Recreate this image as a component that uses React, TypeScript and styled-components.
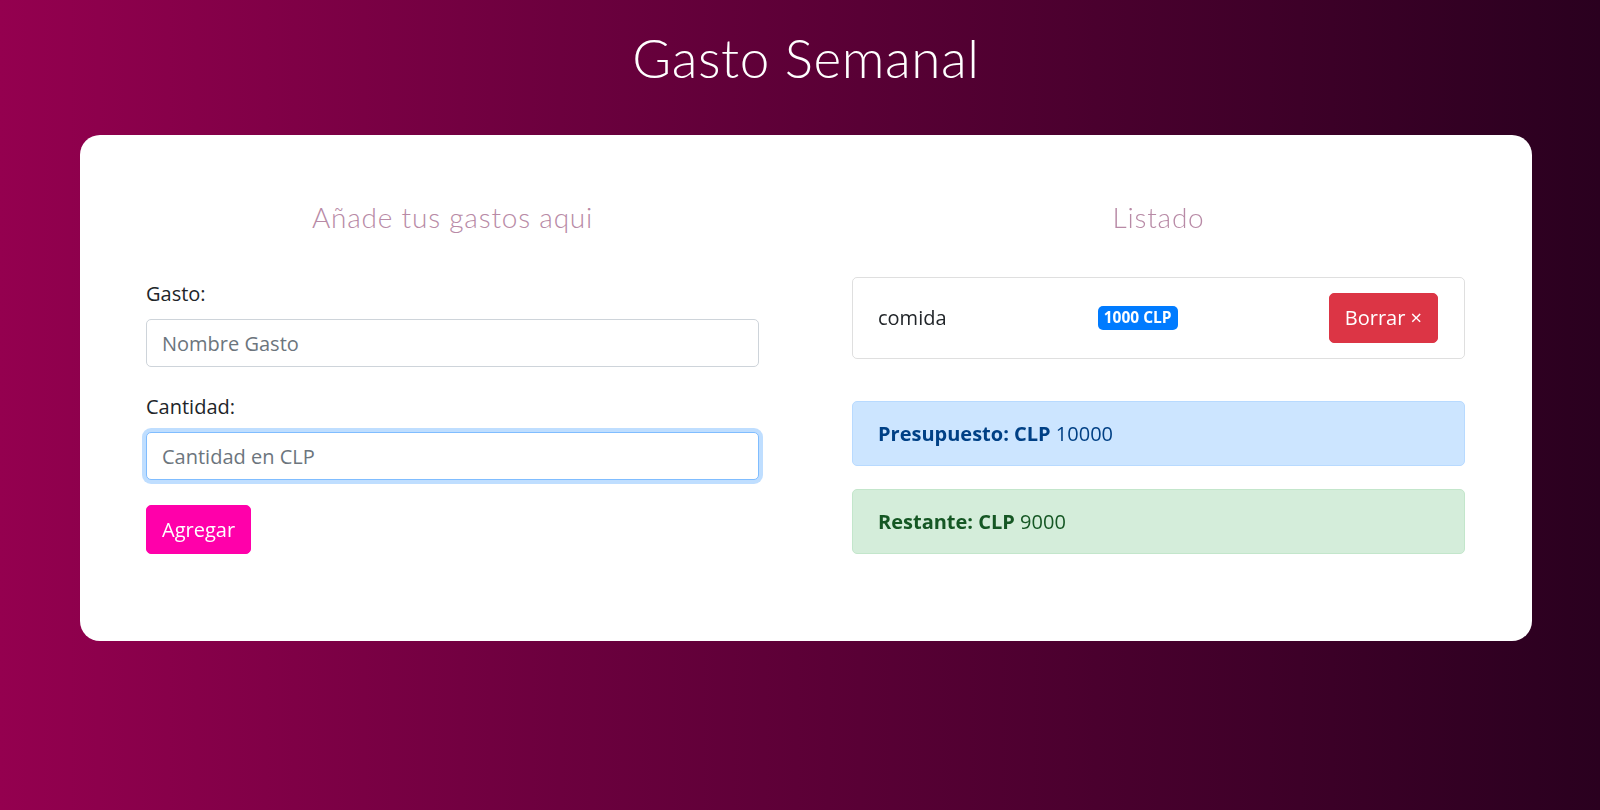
import React from 'react';
import styled, { createGlobalStyle, css } from 'styled-components';

const GlobalStyle = createGlobalStyle`
  * { box-sizing: border-box; }
  body {
    margin: 0;
    font-family: "Open Sans", "Noto Sans", sans-serif;
    color: #212529;
  }
`;

type Variant = 'primary' | 'success';

const ALERTS: Record<Variant, { bg: string; border: string; color: string }> = {
  primary: { bg: '#cce5ff', border: '#b8daff', color: '#004085' },
  success: { bg: '#d4edda', border: '#c3e6cb', color: '#155724' },
};

const App: React.FC = () => {
  return (
    <Page>
      <GlobalStyle />
      <Title>Gasto Semanal</Title>
      <Card>
        <Column>
          <SectionTitle>Añade tus gastos aqui</SectionTitle>
          <Form onSubmit={e => e.preventDefault()}>
            <FormGroup>
              <Label>Gasto:</Label>
              <Input type='text' placeholder='Nombre Gasto' />
            </FormGroup>
            <FormGroup>
              <Label>Cantidad:</Label>
              <Input type='number' placeholder='Cantidad en CLP' $focused autoFocus />
            </FormGroup>
            <AddButton type='submit'>Agregar</AddButton>
          </Form>
        </Column>
        <Column>
          <SectionTitle>Listado</SectionTitle>
          <ListItem>
            <span>comida</span>
            <Badge>1000 CLP</Badge>
            <DeleteButton type='button'>Borrar &times;</DeleteButton>
          </ListItem>
          <Alert $variant='primary'>
            <strong>Presupuesto: CLP</strong> 10000
          </Alert>
          <Alert $variant='success'>
            <strong>Restante: CLP</strong> 9000
          </Alert>
        </Column>
      </Card>
    </Page>
  );
};

export default App;

const Page = styled.div`
  min-height: 100vh;
  padding: 26px 68px 40px 80px;
  background: linear-gradient(to right, #94004f 0%, #6c003e 35%, #2a001f 100%);
`;

const Title = styled.h1`
  margin: 0;
  font-family: Lato, "Open Sans", sans-serif;
  font-weight: 300;
  font-size: 53px;
  line-height: 1.2;
  letter-spacing: 0.6px;
  color: #fff;
  text-align: center;
`;

const Card = styled.div`
  margin-top: 45px;
  background: #fff;
  border-radius: 20px;
  padding: 66px 67px 87px 66px;
  display: grid;
  grid-template-columns: 1fr 1fr;
  column-gap: 93px;
`;

const Column = styled.div`
  display: flex;
  flex-direction: column;
  min-width: 0;
`;

const SectionTitle = styled.h2`
  margin: 0 0 43px;
  font-family: Lato, "Open Sans", sans-serif;
  font-weight: 300;
  font-size: 28px;
  line-height: 1.2;
  letter-spacing: 0.8px;
  color: #b88aa6;
  text-align: center;
`;

const Form = styled.form`
  display: flex;
  flex-direction: column;
  padding-top: 2px;
`;

const FormGroup = styled.div`
  margin-bottom: 25px;
`;

const Label = styled.label`
  display: block;
  font-size: 20px;
  line-height: 30px;
  margin-bottom: 10px;
  color: #212529;
`;

const Input = styled.input<{ $focused?: boolean }>`
  display: block;
  width: 100%;
  height: 48px;
  padding: 0 15px;
  font-family: inherit;
  font-size: 20px;
  color: #495057;
  background: #fff;
  border: 1px solid #ced4da;
  border-radius: 5px;
  outline: none;
  appearance: textfield;
  &::placeholder { color: #6c757d; }
  &::-webkit-inner-spin-button,
  &::-webkit-outer-spin-button { -webkit-appearance: none; margin: 0; }
  ${p => p.$focused && css`
    border-color: #80bdff;
    box-shadow: 0 0 0 4px rgba(0, 123, 255, 0.25);
  `}
`;

const BaseButton = styled.button`
  font-family: inherit;
  font-size: 20px;
  line-height: 30px;
  color: #fff;
  border-radius: 5px;
  cursor: pointer;
`;

const AddButton = styled(BaseButton)`
  align-self: flex-start;
  padding: 8.5px 15px;
  background: #ff00aa;
  border: 1px solid #ff00aa;
`;

const DeleteButton = styled(BaseButton)`
  padding: 9px 15px;
  background: #dc3545;
  border: 1px solid #dc3545;
`;

const ListItem = styled.div`
  display: flex;
  align-items: center;
  justify-content: space-between;
  padding: 15px 26px 15px 25px;
  border: 1px solid rgba(0, 0, 0, 0.125);
  border-radius: 5px;
  margin-bottom: 42px;
  font-size: 20px;
  line-height: 30px;
`;

const Badge = styled.span`
  display: inline-block;
  padding: 4px 6px;
  font-size: 15.5px;
  font-weight: 700;
  line-height: 1;
  color: #fff;
  background: #007bff;
  border-radius: 5px;
`;

const Alert = styled.div<{ $variant: Variant }>`
  padding: 16.5px 25px;
  font-size: 20px;
  line-height: 30px;
  border-radius: 5px;
  border: 1px solid ${p => ALERTS[p.$variant].border};
  background: ${p => ALERTS[p.$variant].bg};
  color: ${p => ALERTS[p.$variant].color};
  & + & { margin-top: 23px; }
  strong { font-weight: 700; }
`;
